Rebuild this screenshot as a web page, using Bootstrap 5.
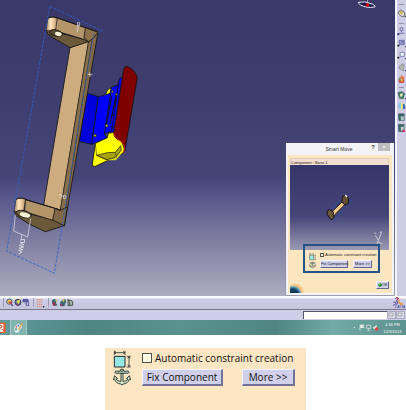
<!DOCTYPE html>
<html lang="en">
<head>
<meta charset="utf-8">
<meta name="viewport" content="width=device-width, initial-scale=1">
<title>Smart Move</title>
<link href="https://cdn.jsdelivr.net/npm/bootstrap@5.3.0/dist/css/bootstrap.min.css" rel="stylesheet">
<style>
body{font-family:"Open Sans","Noto Sans",sans-serif;background:#fff;color:#222}
svg{display:block;flex:none}
button{color:inherit}
.scene{min-height:296px;background:linear-gradient(#393868 0,#3f3e70 35%,#454578 60%,#55558a 66%,#7c7b9f 80%,#adacc0 100%)}
.compass{margin-right:18px}
.side-tools{width:11px;padding-top:4px;background:#cfcde6;border-left:2px solid #f4f4fc}
.side-tools hr{width:5px;margin:0;border-color:#8f8da8;opacity:1}
.tool{padding:0;border:0;background:none;line-height:0}
.stack-a{margin:3px 0 5px}
.stack-b{gap:2px;margin:2px 0 3px}
.stack-c{gap:1px;margin-top:2px}
.smart-dialog{right:1px;bottom:1px;width:108px;background:#f3f3f5;font-family:"Liberation Sans",sans-serif;font-size:4px;line-height:5px;box-shadow:0 0 1px #555}
.dialog-title{height:12px;font-size:5px;line-height:12px;color:#333}
.dialog-title button{height:8px;line-height:7px;border:0;padding:0;font-size:6px}
.help-key{width:10px;background:none;font-weight:bold}
.close-key{width:12px;background:#bcbcbc;color:#fff}
.dialog-body{margin:0 2px 2px;padding:3px 3px 0 2px;background:#fce6c2}
.component-line{height:7px;line-height:7px;border:1px solid #dccdbd;border-bottom:0;background:#f3dfcf}
.preview{height:85px;background:linear-gradient(#35356a 0,#454578 60%,#9b9ab3 100%)}
.focus-frame{width:77px;margin:-6px 10px 0 13px;padding:6px 0 2px 4px;border:2px solid #265288}
.frame-rows{gap:3px}
.dialog-foot{padding-top:7px}
.raised{padding:0;background:#d1d0ea;border:1px solid;border-color:#f5f5ff #66668c #66668c #f5f5ff;color:#111}
.tiny{height:8px;line-height:6px;font-size:4px}
.tiny-fix{width:28px;margin-right:5px}
.tiny-more{width:19px}
.ok-key{width:13px}
.tick{appearance:none;margin:0;background:#ffffe6;border:1px solid #55524a;border-radius:0;flex:none}
.tick:checked{background:#444}
.tick-s{width:4px;height:4px;margin-right:1px}
.tick-l{width:10px;height:10px}
.bottom-tools{height:14px;padding-right:1px;background:linear-gradient(#fff 0,#f6f6ff 2px,#cfcee7 3px,#c6c5df 100%);border-bottom:1px solid #77778e}
.vline{width:1px;height:9px;margin:0 2px 0 3px;background:#9d9bb5}
.status{height:10px;padding-right:1px;background:#cfcde8}
.command{width:84px;height:8px;padding:0 2px;border:0;border-top:1px solid #55556a;border-left:1px solid #55556a;border-radius:0;font-size:5px;background:#fff}
.sbtn{width:9px;height:8px;padding:0;border:1px solid #aaa9bd;background:#dddcee}
.taskbar{height:15px;background:linear-gradient(90deg,#5f9b99 0,#4e8583 22%,#5a9290 45%,#508583 68%,#71aaa6 82%,#5b918e 100%)}
.task-active{width:17px;background:#82b3af;border-left:1px solid #a8cbc8;border-right:1px solid #a8cbc8}
.clock{width:27px;font-family:"Liberation Sans",sans-serif;font-size:4px;line-height:7px;color:#fff}
.detail{width:201px;min-height:62px;margin:13px 100px 0 105px;padding:2px 11px 0 8px;background:#fde6c3;font-size:10px;line-height:14px;color:#111}
.detail-rows{margin-left:11px}
.check-line{height:15px;gap:3px}
.big-key{height:17px;line-height:14px;border-width:1px 2px 2px 1px;border-color:#f3f2ff #73719a #73719a #f3f2ff}
.fix-key{width:81px}
.more-key{width:53px}
</style>
<script src="https://cdn.jsdelivr.net/npm/bootstrap@5.3.0/dist/js/bootstrap.bundle.min.js"></script>
</head>
<body class="overflow-x-hidden">
<svg width="0" height="0" class="position-absolute" aria-hidden="true">
<defs>
<symbol id="constraint" viewBox="0 0 54 52"><path d="M4 18h32v32H4z" fill="#96e7e6" stroke="#232b2b" stroke-width="3"/><path d="M4 1v13M36 1v13M4 7h32M9 3L5 7l4 4M31 3l4 4-4 4M41 18h12M41 50h12M48 19v30M44 24l4-4 4 4M44 44l4 4 4-4" fill="none" stroke="#232b2b" stroke-width="2.4"/></symbol>
<symbol id="anchor" viewBox="0 0 54 50"><path d="M24 13h6v25c8 0 13-3 15-7l-5-1 9-9 4 12-4-1c-2 8-9 13-18 14l-4 3-4-3C14 45 7 40 5 32l-4 1 4-12 9 9-5 1c2 4 7 7 15 7z" fill="#cfdfc5" stroke="#1f2b25" stroke-width="2.6"/><path d="M5 11l4-4 12 1 1-5 5-2 5 2 1 5 12-1 4 4-4 3H9z" fill="#a8c8b9" stroke="#1f2b25" stroke-width="2.4"/><circle cx="27" cy="6" r="3" fill="#fde6c3" stroke="#1f2b25" stroke-width="2"/></symbol>
</defs>
</svg>
<main>
<div class="d-flex">
<section class="scene flex-grow-1 position-relative d-flex justify-content-between align-items-start" aria-label="3D view">
<svg width="150" height="280" viewBox="0 0 450 840" role="img" aria-label="Assembly">
<defs><linearGradient id="boss"><stop offset="0" stop-color="#9c7f5b"/><stop offset=".4" stop-color="#ffe5c1"/><stop offset=".65" stop-color="#efc99a"/><stop offset="1" stop-color="#a88a63"/></linearGradient></defs>
<g stroke="#141414" stroke-width="2.5" stroke-linejoin="round">
<path d="M318 281q4-16 16-16l12 4-6 26-24 0z" fill="#ff0"/>
<path d="M356 243l4-10 8 2-2 40-14 90-10 35-10-4z" fill="#00f"/>
<path d="M335 262l20-8-20 140-22 8-3-60z" fill="#00f"/>
<path d="M261 279l34 11-20 143-37-9z" fill="#00d"/>
<path d="M295 290l37-10-19 122 10 12-48 19z" fill="#00f"/>
<path d="M286 430l36-17 3-13 17-3q5 17 22 24l9 25q2 8-6 15l-81 38q-9 2-9-6z" fill="#ff0"/>
<path d="M290 464l25 6 30-5 12-20 5 19-15 17-27 0z" fill="#dddc10" stroke="none"/><path d="M290 466l32-8 24-1 16-20 2 14-19 22-25 6z" fill="#a7a20d" stroke-width="2"/>
<path d="M286 432l4 34 30 13M346 457l4 16" fill="none" stroke-width="1.5"/>
<path d="M371 207q2-9 10-8 22 8 31 34l-37 218q-2-22-15-30-18-5-19-23z" fill="#800000"/><path d="M342 398q1 16 17 23 17 10 14 30l-4 8" fill="none" stroke="#d01919" stroke-width="3"/>
<path d="M335 290l-16 85M350 280l-20 92M342 302l9-2M339 318l9-2M335 347l9-2M332 379l9 4" fill="none" stroke-width="3"/>
<g fill="#c9c529" stroke-width="2"><circle cx="337" cy="275" r="3"/><circle cx="320" cy="377" r="4"/><circle cx="285" cy="407" r="4"/><circle cx="349" cy="283" r="3"/></g>
<path d="M256 83l38 14L193 678l-30-18 20-28 83-506z" fill="#806846"/>
<path d="M210 143l56-20-85 508-50-16z" fill="#cdad7f"/>
<path d="M266 123l-85 508 10 30L279 101" fill="#88704d" stroke-width="1.5"/>
<path d="M137 88l119 31 10 6-56 18-53-31q-19-12-20-24z" fill="#6b593a"/>
<path d="M168 52l88 31 37 12-14 20-13 10-18-8-83-25z" fill="#b5966b"/>
<path d="M256 83l-4 31 14 11 13-10 15-18z" fill="#8e724b"/>
<path d="M138 91l6-37q13-6 28 0l-5 35q-13 7-29 2z" fill="url(#boss)" stroke-width="2"/>
<path d="M144 54q16-8 39 4l73 25" fill="none"/>
<ellipse cx="168" cy="99" rx="20" ry="9" transform="rotate(14 168 99)" fill="#5b4b32"/><ellipse cx="175" cy="102" rx="10" ry="6" transform="rotate(14 175 102)" fill="#fff5df" stroke="none"/>
<path d="M43 634l46 8 71 17 33 18-57 18q-50-20-89-49z" fill="#6b593a"/>
<path d="M76 599l89 26 15 5-18 32-88-27z" fill="#b5966b"/><path d="M165 625l-7 35 35 17 9-56-21 10z" fill="#806846"/>
<path d="M42 634l6-36q10-7 29-1l-6 36q-14 7-29 1z" fill="url(#boss)" stroke-width="2"/>
<path d="M48 598q14-8 37 3l80 24 16 6" fill="none"/>
<ellipse cx="71" cy="642" rx="23" ry="10" transform="rotate(14 71 642)" fill="#776547"/><ellipse cx="75" cy="645" rx="16" ry="7" transform="rotate(14 75 645)" fill="#f5f6d9" stroke="none"/>
</g>
<path d="M149 19l158 74-12 4M149 19L20 753l143 67L281 101" fill="none" stroke="#2d60cc" stroke-width="2.5" stroke-dasharray="9 4"/>
<path d="M232 97l3-24M232 68h7v9h-7zM263 223h14M269 217l2 13M177 584l9 2 3 5M190 587h7v8h-7zM46 644l-5 49 42 18 9-55M66 704l-3 16" fill="none" stroke="#e7e7ef" stroke-width="2"/>
<path d="M61 720l13-2-1 10-13-1 12 7-14 2 13 5-14 3 12 5-13 2 10 5-10 6" fill="none" stroke="#d4d4e1" stroke-width="3"/>
</svg>
<svg class="compass" width="20" height="12" viewBox="0 0 60 36" aria-label="Compass"><path d="M4 7q18-5 42 5 12 7 8 9-26 4-43-6-9-6-7-8z" fill="#191a50" stroke="#eee9fa" stroke-width="3"/><path d="M32 0v9" stroke="#ddd" stroke-width="2"/><circle cx="31" cy="15" r="5" fill="red"/></svg>

<section class="smart-dialog position-absolute" role="dialog" aria-label="Smart Move">
<header class="dialog-title d-flex align-items-start">
<span class="flex-grow-1 text-center ps-4">Smart Move</span>
<button type="button" class="help-key" aria-label="Help">?</button>
<button type="button" class="close-key me-1" aria-label="Close">×</button>
</header>
<div class="dialog-body">
<div class="component-line">Component : Base.1</div>
<div class="preview">
<svg class="w-100 h-100" viewBox="0 0 297 255" preserveAspectRatio="none" role="img" aria-label="Component preview">
<path d="M112 144l54-53 18 16-53 58z" fill="none" stroke="#205cc6" stroke-width="2" stroke-dasharray="6 2"/><path d="M120 146l43-42 7 9-42 43z" fill="#edc58d" stroke="#1a1713" stroke-width="3"/><path d="M157 94l11-3 8 9-2 17-11 2-7-9z" fill="#665038" stroke="#15120e" stroke-width="3"/><path d="M111 138l8-4 12 8-2 8 4 6-9 9-12-16z" fill="#6d573c" stroke="#15120e" stroke-width="3"/><path d="M166 90l5 6" stroke="#fff" stroke-width="4"/>
<path d="M256 211l9 15 10-24M265 226l-5 15M253 204l6 1M269 203l7-3M266 232l11 4" stroke="#d9d9e1" stroke-width="2.5" fill="none"/>
</svg>
</div>
<div class="focus-frame position-relative">
<div class="d-flex">
<div class="me-1"><svg width="7" height="9"><use href="#constraint"/></svg><svg width="7" height="8"><use href="#anchor"/></svg></div>
<div class="frame-rows d-flex flex-column">
<div class="d-flex align-items-center text-nowrap"><input class="tick tick-s" type="checkbox" id="auto-small"><label for="auto-small">Automatic constraint creation</label></div>
<div class="d-flex"><button type="button" class="raised tiny tiny-fix text-nowrap">Fix Component</button><button type="button" class="raised tiny tiny-more text-nowrap">More &gt;&gt;</button></div>
</div>
</div>
</div>
<div class="dialog-foot d-flex justify-content-between align-items-end">
<svg width="14" height="13" viewBox="0 0 42 39"><defs><radialGradient id="glow"><stop offset=".5" stop-color="#f3a64e"/><stop offset="1" stop-color="#fce6c2"/></radialGradient><radialGradient id="globe"><stop offset="0" stop-color="#102d40"/><stop offset=".65" stop-color="#164965"/><stop offset="1" stop-color="#7cc5dc"/></radialGradient></defs><circle cx="15" cy="37" r="29" fill="url(#glow)"/><circle cx="9" cy="43" r="25" fill="url(#globe)"/></svg>
<button type="button" class="raised tiny ok-key d-flex align-items-center justify-content-center mb-1"><svg width="4" height="4" viewBox="0 0 10 10"><circle cx="5" cy="5" r="4.5" fill="#168b1c"/><circle cx="4" cy="3" r="1.5" fill="#9f9"/></svg>OK</button>
</div>
</div>
</section>
</section>
<nav class="side-tools d-flex flex-column align-items-center flex-shrink-0" aria-label="Workbench tools">
<hr>
<button type="button" class="tool stack-a" aria-label="Select"><svg width="9" height="10" viewBox="0 0 20 20"><path d="M2 10l6-7 8 5 2 9-8 1z" fill="#d7d6cb" stroke="#66655f" stroke-width="2"/><circle cx="9" cy="9" r="3" fill="#c8a93d"/><path d="M17 17h3v3z"/></svg></button>
<hr>
<div class="stack-b d-flex flex-column">
<button type="button" class="tool" aria-label="Component"><svg width="9" height="10" viewBox="0 0 20 20"><path d="M7 3h6v6H7zM10 9v4M5 15h12" fill="none" stroke="#7272a8" stroke-width="2"/><path d="M1 15h4v4H1z" fill="#16165b"/></svg></button>
<button type="button" class="tool" aria-label="Product"><svg width="9" height="10" viewBox="0 0 20 20"><path d="M5 4h11v9H5zM8 7h7M8 10h7" fill="#b1b3db" stroke="#6464a5" stroke-width="2"/><path d="M1 14h4v4H1zM17 17h3v3z" fill="#111"/></svg></button>
<button type="button" class="tool" aria-label="Part"><svg width="9" height="10" viewBox="0 0 20 20"><path d="M7 4h9v9H7z" fill="#eff" stroke="#7c7cab" stroke-width="2"/><path d="M1 14h4v4H1zM17 17h3v3z" fill="#111"/></svg></button>
<button type="button" class="tool" aria-label="Existing component"><svg width="9" height="10" viewBox="0 0 20 20"><path d="M5 9l8-7 3 3-2 14-9-5z" fill="#aaa" stroke="#777"/><path d="M8 8l6 3M8 13l6 2" stroke="#d6d6d6"/><path d="M17 17h3v3z"/></svg></button>
<button type="button" class="tool" aria-label="Replace component"><svg width="9" height="10" viewBox="0 0 20 20"><path d="M9 1l8 5-3 7-7-3z" fill="#e77b50"/><path d="M3 10l7 2 7-1-2 8H5z" fill="#c75142"/><path d="M4 6l5 2-3 4z" fill="#358c69"/><path d="M8 10l6 4-5 3z" fill="#e8b73c"/></svg></button>
</div>
<hr>
<div class="stack-c d-flex flex-column">
<button type="button" class="tool" aria-label="Graph tree"><svg width="9" height="10" viewBox="0 0 20 20"><path d="M2 5l9-3 6 5-3 11H6z" fill="#397b65" stroke="#25483e"/><path d="M7 7l6-1-1 7-5 1z" fill="#ede7bb"/><path d="M17 17h3v3z"/></svg></button>
<button type="button" class="tool" aria-label="Numbering"><svg width="9" height="10" viewBox="0 0 20 20"><path d="M3 4l7-2v15l-7-2z" fill="#8bc7e4"/><path d="M9 2l5 3v12l-5 1z" fill="#f2ed75"/><path d="M13 5l5 2v9l-5 2z" fill="#3e69be"/></svg></button>
<button type="button" class="tool" aria-label="Load"><svg width="9" height="10" viewBox="0 0 20 20"><path d="M3 3h13v4H8v2h8v9H4z" fill="#396967" stroke="#243e40"/><path d="M8 9h7v8H9z" fill="#b3cfd1"/></svg></button>
<button type="button" class="tool" aria-label="Unload"><svg width="9" height="10" viewBox="0 0 20 20"><path d="M3 2h13v4H8v2h8v10H4z" fill="#396967" stroke="#243e40"/><path d="M8 8h7v8H9z" fill="#b3cfd1"/><path d="M12 14h6v5h-6z" fill="#d43467"/></svg></button>
</div>
</nav>
</div>

<nav class="bottom-tools d-flex align-items-center" aria-label="Assembly tools">
<span class="vline"></span>
<button type="button" class="tool" aria-label="Coincidence"><svg width="8" height="9" viewBox="0 0 24 27"><circle cx="10" cy="11" r="8" fill="#f0c43d" stroke="#38609c" stroke-width="3"/><path d="M6 11h12v11z" fill="#cc344a"/><path d="M14 13l8 10-5 2z" fill="#434278"/></svg></button>
<button type="button" class="tool" aria-label="Contact"><svg width="8" height="9" viewBox="0 0 24 27"><circle cx="12" cy="13" r="9" fill="#647c9b" stroke="#36365e" stroke-width="3"/><path d="M7 10l12-6-5 15z" fill="#eee14d"/><path d="M8 17l5 5" stroke="#962d69" stroke-width="4"/></svg></button>
<button type="button" class="tool" aria-label="Offset"><svg width="8" height="9" viewBox="0 0 24 27"><path d="M3 4h15v7H3z" fill="#6060bd" stroke="#333370" stroke-width="2"/><path d="M13 11h7v12h-7z" fill="#bdb9e3" stroke="#3b3b7a" stroke-width="2"/><path d="M6 14l6 5" stroke="#333"/></svg></button>
<span class="vline"></span>
<button type="button" class="tool" aria-label="Grid"><svg width="9" height="10" viewBox="0 0 27 30"><path d="M2 5h17M2 12h17M2 19h17M2 26h17" stroke="#e98b6c" stroke-width="3" stroke-dasharray="5 1"/><path d="M20 25h6l-3 4z"/></svg></button>
<span class="vline"></span>
<button type="button" class="tool" aria-label="Move"><svg width="8" height="9" viewBox="0 0 24 27"><path d="M3 6l7-3 9 5-5 6 6 8-10 2-7-8z" fill="#376c71"/><path d="M5 13h8v10H5z" fill="#9e3147"/><path d="M12 7l6-3v8z" fill="#e5c54d"/></svg></button>
<button type="button" class="tool" aria-label="Explode"><svg width="8" height="9" viewBox="0 0 24 27"><path d="M4 12l13-9 4 6-5 15H5z" fill="#397173" stroke="#383d49"/><path d="M10 3l8 2-6 8z" fill="#e1c65b"/><path d="M3 18h9v5H3z" fill="#7d3e67"/></svg></button>
<button type="button" class="tool" aria-label="Catalog"><svg width="7" height="9" viewBox="0 0 21 27"><path d="M3 3v20h7M3 7h9l5 4v11H8V10" fill="#a8bcac" stroke="#45554a" stroke-width="3"/></svg></button>
<svg class="ms-auto" width="13" height="12" viewBox="0 0 39 36" role="img" aria-label="CATIA"><path d="M10 5q9-7 8 1l-5 7 5 3-4 7M4 16q10-2 7 4-3 5-7 5" fill="none" stroke="#433b9a" stroke-width="3"/><path d="M13 2l6 3-5 4" stroke="#d72638" stroke-width="3" fill="none"/><path d="M22 8l-2 8 8 7M26 17l7 6" fill="none" stroke="#e69b43" stroke-width="4"/><text x="8" y="33" font-family="Liberation Sans, sans-serif" font-size="11" font-style="italic" fill="#283585">CATIA</text></svg>
</nav>
<div class="status d-flex justify-content-end align-items-center">
<input class="command" type="text" aria-label="Command">
<button type="button" class="sbtn" aria-label="Dialog"><svg width="7" height="6"><path d="M1 1h4v3H1z" fill="none" stroke="#aaa"/></svg></button>
<button type="button" class="sbtn" aria-label="Options"><svg width="7" height="6"><path d="M1 1h4v3H1z" fill="none" stroke="#aaa"/></svg></button>
</div>
<footer class="taskbar d-flex align-items-center">
<button type="button" class="tool" aria-label="PowerPoint"><svg width="6" height="13" viewBox="0 0 18 39"><path d="M0 5h17v31H0z" fill="#e86536"/><path d="M0 9h10v23H0z" fill="#fff"/><path d="M0 12q8 0 6 6-2 4-6 3M5 24l7 5" fill="none" stroke="#d54d27" stroke-width="3"/></svg></button>
<button type="button" class="tool task-active h-100 ms-1 d-flex align-items-center justify-content-center" aria-label="Paint"><svg width="11" height="12" viewBox="0 0 33 36"><path d="M4 14q8-12 20-7 7 6 0 14l-4 3q0 9-9 9Q0 31 4 14z" fill="#d7edf4" stroke="#77a6b9"/><circle cx="10" cy="14" r="2.5" fill="#d55"/><circle cx="9" cy="22" r="3" fill="#4a9a58"/><circle cx="16" cy="11" r="2.5" fill="#4679c8"/><path d="M17 23L28 3" stroke="#e9a242" stroke-width="4"/></svg></button>
<svg class="ms-auto" width="27" height="9" viewBox="0 0 81 27" role="img" aria-label="Notification area"><path d="M4 15l3-3 3 3z" fill="#fff"/><path d="M24 5v18M25 6h11l-3 4 3 4H25" fill="#eee" stroke="#eee" stroke-width="2"/><path d="M44 7h12v9H44zM50 16v5M46 22h9" fill="none" stroke="#eee" stroke-width="2"/><path d="M64 11h4l6-6v17l-6-5h-4z" fill="#eee"/><circle cx="74" cy="18" r="5" fill="#df3e3e"/></svg>
<time class="clock text-center" datetime="2013-12-03T16:33">4:33 PM<br>12/3/2013</time>
</footer>

<section class="detail" aria-label="Constraint options">
<div class="d-flex">
<div><svg width="18" height="18"><use href="#constraint"/></svg><svg width="18" height="18"><use href="#anchor"/></svg></div>
<div class="detail-rows flex-grow-1">
<div class="check-line d-flex align-items-center text-nowrap"><input class="tick tick-l" type="checkbox" id="auto-large"><label for="auto-large">Automatic constraint creation</label></div>
<div class="d-flex justify-content-between pt-1"><button type="button" class="raised big-key fix-key">Fix Component</button><button type="button" class="raised big-key more-key">More &gt;&gt;</button></div>
</div>
</div>
</section>
</main>
</body>
</html>
